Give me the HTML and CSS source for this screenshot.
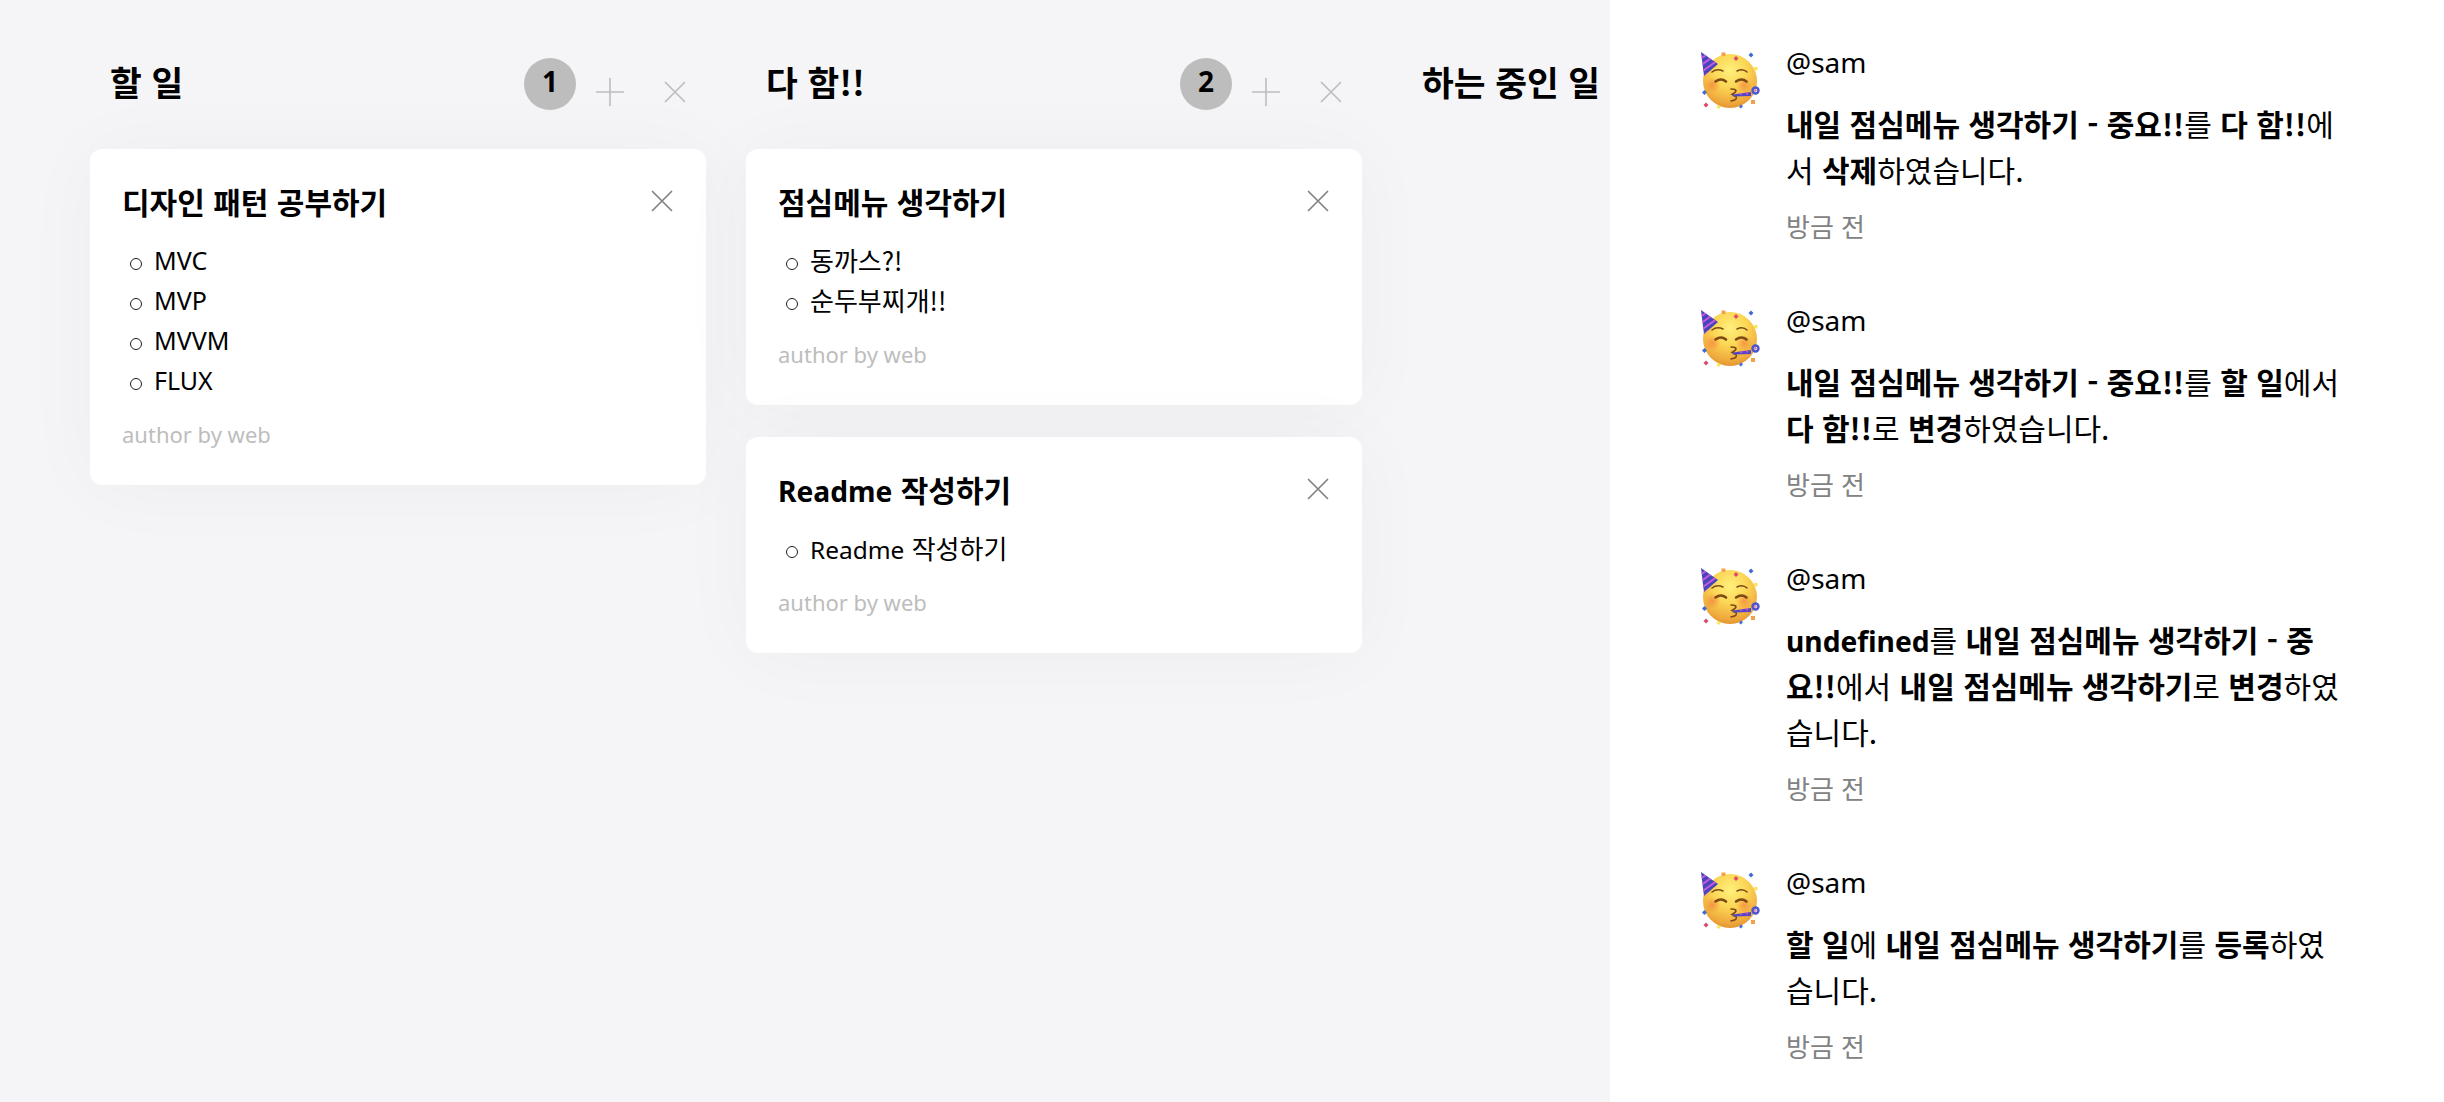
FILE: index.html
```html
<!DOCTYPE html>
<html lang="ko">
<head>
<meta charset="utf-8">
<title>할 일</title>
<link rel="stylesheet" href="styles.css">
</head>
<body>
<svg class="defs" aria-hidden="true">
  <defs>
    <radialGradient id="skin" cx=".5" cy=".3" r=".72">
      <stop offset="0" stop-color="#fff07c"/>
      <stop offset=".45" stop-color="#fbd554"/>
      <stop offset=".85" stop-color="#efa83b"/>
      <stop offset="1" stop-color="#de902f"/>
    </radialGradient>
    <radialGradient id="blush"><stop offset="0" stop-color="#f47b3c" stop-opacity=".65"/><stop offset="1" stop-color="#f47b3c" stop-opacity="0"/></radialGradient>
    <clipPath id="hat"><path d="M1 1 18 13 4 25Z"/></clipPath>
  </defs>
  <symbol id="party" viewBox="0 0 60 60">
    <circle cx="30" cy="30" r="27" fill="url(#skin)"/>
    <circle cx="12.500" cy="34" r="8" fill="url(#blush)"/>
    <circle cx="44" cy="34" r="8" fill="url(#blush)"/>
    <g clip-path="url(#hat)">
      <rect width="20" height="27" fill="#4645bd"/>
      <path d="M0 8 9 2M0 15 14 5M0 22 18 9M3 26 20 14" stroke="#c65ad9" stroke-width="2"/>
    </g>
    <g fill="none" stroke="#7b4a15" stroke-width="1.600" stroke-linecap="round">
      <path d="M12 21q5-4 11-1M37 20q6-3 10 1"/>
      <path d="M15.500 30.500q5.500-4 10.500 0M36 30.500q5.500-4 10.500 0" stroke-width="2.600"/>
      <path d="M31 38q7 0 4 3.500l-3 2 4 2q2 3.500-5 4.500"/>
    </g>
    <path d="m33 43.500 18-2.500v4l-18 .500Z" fill="#5046c8"/>
    <path d="M40 43h2M46 42.500h2" stroke="#cf4ec0" stroke-width="2"/>
    <circle cx="55.500" cy="39.500" r="3" fill="none" stroke="#4a55cf" stroke-width="2.400"/>
    <circle cx="55.500" cy="39.500" r="1.200" fill="#d77ed6"/>
    <g fill="#dc4b68"><path d="m36 5 2.500 2.500-2.500 2.500-2.500-2.500Z"/><path d="m6 51.500 2.500 2.500-2.500 2.500L3.500 54Z"/></g>
    <g fill="#3f6ad8"><path d="m51 1.500 2.500 2.500L51 6.500 48.500 4Z"/><path d="m4.500 39 2.500 2.500L4.500 44 2 41.500Z"/><path d="m41 53.500 2 1.500-2 2.500-2-1.500Z"/></g>
    <g fill="#f3a04a"><rect x="21.500" y="1.500" width="4" height="3.500"/><rect x="51" y="49" width="4" height="4"/></g>
    <g fill="#fae55c"><rect x="54" y="16" width="3.500" height="3.500"/><path d="m18 54 3 1-2 3-2.500-1.500Z"/></g>
  </symbol>
  <symbol id="plus" viewBox="0 0 28 28"><path d="M14 0v28M0 14h28" stroke="currentColor" stroke-width="1.600"/></symbol>
  <symbol id="close" viewBox="0 0 22 22"><path d="m1.500 1.500 19 19m0-19-19 19" stroke="currentColor" stroke-width="1.700" stroke-linecap="round"/></symbol>
</svg>

<main class="board">
  <section class="column">
    <header class="column-head">
      <h2>할 일</h2>
      <span class="count">1</span>
      <svg class="plus"><use href="#plus"/></svg>
      <svg class="close"><use href="#close"/></svg>
    </header>
    <article class="card">
      <div class="card-head"><h3>디자인 패턴 공부하기</h3><svg class="close"><use href="#close"/></svg></div>
      <ul class="latin-list"><li>MVC</li><li>MVP</li><li>MVVM</li><li>FLUX</li></ul>
      <p class="author">author by web</p>
    </article>
  </section>

  <section class="column">
    <header class="column-head">
      <h2>다 함!!</h2>
      <span class="count">2</span>
      <svg class="plus"><use href="#plus"/></svg>
      <svg class="close"><use href="#close"/></svg>
    </header>
    <article class="card">
      <div class="card-head"><h3>점심메뉴 생각하기</h3><svg class="close"><use href="#close"/></svg></div>
      <ul><li>동까스?!</li><li>순두부찌개!!</li></ul>
      <p class="author">author by web</p>
    </article>
    <article class="card">
      <div class="card-head"><h3><span class="latin">Readme</span> 작성하기</h3><svg class="close"><use href="#close"/></svg></div>
      <ul><li><span class="latin">Readme</span> 작성하기</li></ul>
      <p class="author">author by web</p>
    </article>
  </section>

  <section class="column">
    <header class="column-head"><h2>하는 중인 일</h2></header>
  </section>
</main>

<aside class="feed">
  <article class="entry">
    <svg class="avatar"><use href="#party"/></svg>
    <div>
      <p class="user">@sam</p>
      <p class="text"><b>내일 점심메뉴 생각하기 - 중요!!</b>를 <b>다 함!!</b>에<br>서 <b>삭제</b>하였습니다.</p>
      <p class="time">방금 전</p>
    </div>
  </article>
  <article class="entry">
    <svg class="avatar"><use href="#party"/></svg>
    <div>
      <p class="user">@sam</p>
      <p class="text"><b>내일 점심메뉴 생각하기 - 중요!!</b>를 <b>할 일</b>에서<br><b>다 함!!</b>로 <b>변경</b>하였습니다.</p>
      <p class="time">방금 전</p>
    </div>
  </article>
  <article class="entry">
    <svg class="avatar"><use href="#party"/></svg>
    <div>
      <p class="user">@sam</p>
      <p class="text"><b><span class="latin">undefined</span></b>를 <b>내일 점심메뉴 생각하기 - 중<br>요!!</b>에서 <b>내일 점심메뉴 생각하기</b>로 <b>변경</b>하였<br>습니다.</p>
      <p class="time">방금 전</p>
    </div>
  </article>
  <article class="entry">
    <svg class="avatar"><use href="#party"/></svg>
    <div>
      <p class="user">@sam</p>
      <p class="text"><b>할 일</b>에 <b>내일 점심메뉴 생각하기</b>를 <b>등록</b>하였<br>습니다.</p>
      <p class="time">방금 전</p>
    </div>
  </article>
</aside>
</body>
</html>
```
FILE: styles.css
```css
* { box-sizing: border-box; margin: 0; padding: 0; }

body {
  display: flex;
  height: 1102px;
  overflow: hidden;
  background: #f5f5f7;
  color: #000;
  font-family: "Noto Sans CJK KR", sans-serif;
  white-space: nowrap;
}

.defs { position: absolute; width: 0; height: 0; }

.board {
  display: flex;
  gap: 40px;
  width: 1610px;
  flex: none;
  padding: 56px 0 0 90px;
  overflow: hidden;
}

.column { width: 616px; flex: none; }

.column-head {
  display: flex;
  align-items: flex-start;
  height: 93px;
  padding: 2px 20px 0;
  color: #bdbdbd;
}

.column-head h2 {
  flex: 1;
  color: #000;
  font-size: 34.5px;
  line-height: 46px;
}

.count {
  width: 52px;
  height: 52px;
  border-radius: 50%;
  background: #bdbdbd;
  color: #000;
  font: bold 28px/47px "Noto Sans", sans-serif;
  text-align: center;
}

.plus { width: 28px; height: 28px; margin: 20px 40px 0 20px; }
.close { width: 22px; height: 22px; flex: none; }
.column-head .close { margin-top: 23px; }

.card {
  padding: 32px 32px 31px;
  border-radius: 12px;
  background: #fff;
  box-shadow: 0 2px 80px rgba(0, 0, 0, .035);
}

.card + .card { margin-top: 32px; }

.card-head {
  display: flex;
  justify-content: space-between;
  align-items: flex-start;
  height: 59px;
}

.card-head h3 { font-size: 30px; line-height: 40px; }
.card-head .close { margin: 9px 1px 0 0; color: #828282; }

ul {
  padding-left: 32px;
  font-size: 26px;
  line-height: 40px;
  list-style: none;
}

li::before {
  content: "";
  float: left;
  width: 10px;
  height: 10px;
  margin: 18px 0 0 -24px;
  border: 1px solid #222;
  border-radius: 50%;
}

.latin, .latin-list { font-family: "Noto Sans", sans-serif; }
.latin { font-size: .94em; line-height: 1; }
.latin-list { font-size: 25px; }

.author {
  height: 54px;
  padding-top: 17px;
  color: #bdbdbd;
  font: 22px/34px "Noto Sans", sans-serif;
}

.feed { flex: 1; padding: 39px 0 0 90px; background: #fff; }

.entry { display: flex; gap: 26px; padding-bottom: 51px; }

.avatar { width: 60px; height: 60px; flex: none; margin-top: 12px; }

.user { font: 28px/46px "Noto Sans", sans-serif; }
.text { margin-top: 15px; font-size: 30px; line-height: 46px; }
.time { margin-top: 14px; color: #828282; font-size: 26px; line-height: 40px; }
```
